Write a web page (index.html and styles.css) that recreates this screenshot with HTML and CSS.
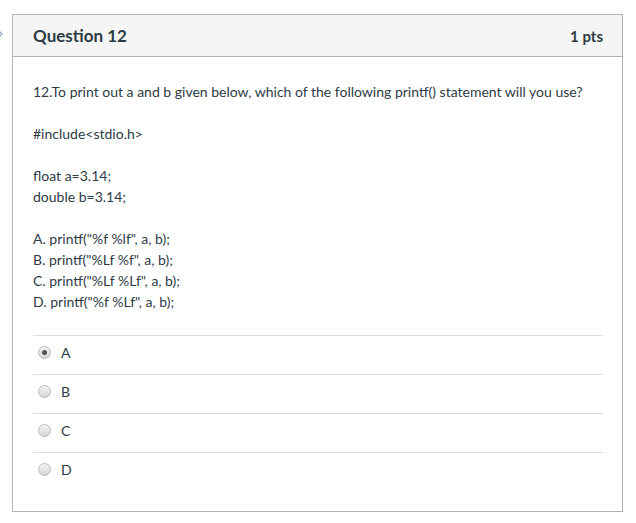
FILE: index.html
```html
<!DOCTYPE html>
<html>
<head>
<meta charset="utf-8">
<link rel="stylesheet" href="styles.css">
</head>
<body>
<div class="page">
  <svg class="nav-arrow" width="10" height="14" viewBox="0 0 10 14"><path d="M2 2 L7 7 L2 12" fill="none" stroke="#9aacbf" stroke-width="1.4"/></svg>
  <div class="question">
    <div class="q-header">
      <span class="q-title">Question 12</span>
      <span class="q-pts">1 pts</span>
    </div>
    <div class="q-body">
      <p>12.To print out a and b given below, which of the following printf() statement will you use?</p>
      <p>#include&lt;stdio.h&gt;</p>
      <p>float a=3.14;<br>double b=3.14;</p>
      <p class="last">A. printf("%f %lf", a, b);<br>B. printf("%Lf %f", a, b);<br>C. printf("%Lf %Lf", a, b);<br>D. printf("%f %Lf", a, b);</p>
      <div class="answers">
        <label class="answer"><span class="radio checked"></span><span class="label">A</span></label>
        <label class="answer"><span class="radio"></span><span class="label">B</span></label>
        <label class="answer"><span class="radio"></span><span class="label">C</span></label>
        <label class="answer"><span class="radio"></span><span class="label">D</span></label>
      </div>
    </div>
  </div>
</div>
</body>
</html>
```
FILE: styles.css
```css
html, body {
  margin: 0;
  padding: 0;
  background: #fff;
}
body {
  font-family: Lato, "Open Sans", sans-serif;
  color: #2d3b45;
}
.page {
  position: relative;
  padding: 14px 0 0 12px;
}
.nav-arrow {
  position: absolute;
  left: -5px;
  top: 27px;
}
.question {
  width: 609px;
  height: 496px;
  border: 1px solid #b3b3b3;
}
.q-header {
  display: flex;
  align-items: center;
  justify-content: space-between;
  height: 41px;
  padding: 0 19px 0 20px;
  background: #f5f5f5;
  border-bottom: 1px solid #b3b3b3;
}
.q-title {
  font-size: 17px;
  font-weight: 700;
}
.q-pts {
  font-size: 15px;
  font-weight: 700;
}
.q-body {
  padding: 24px 19px 0 20px;
  font-size: 14px;
  line-height: 21px;
}
.q-body p {
  margin: 0 0 21px 0;
}
.q-body p.last {
  margin-bottom: 23px;
}
.answers {
  border-top: 1px solid #dcdcdc;
}
.answer {
  display: flex;
  align-items: center;
  height: 32px;
  padding-bottom: 6px;
  border-bottom: 1px solid #dcdcdc;
}
.answer:last-child {
  border-bottom: none;
}
.radio {
  width: 11px;
  height: 11px;
  border-radius: 50%;
  border: 1px solid #b9b9b9;
  background: linear-gradient(#f4f4f4, #d6d6d6);
  margin-left: 5px;
  position: relative;
}
.radio.checked::after {
  content: "";
  position: absolute;
  left: 3px;
  top: 3px;
  width: 5px;
  height: 5px;
  border-radius: 50%;
  background: #555;
}
.label {
  margin-left: 10px;
  font-size: 14px;
}
```
